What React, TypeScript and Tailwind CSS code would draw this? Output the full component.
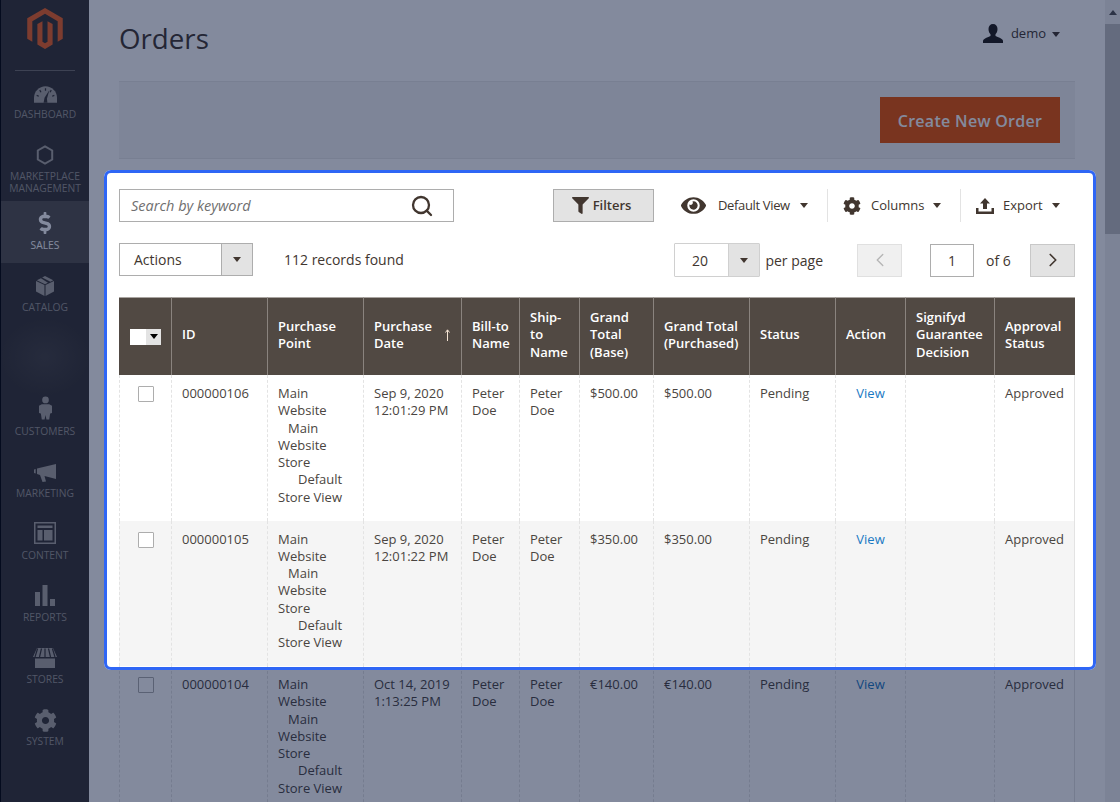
import type { ReactNode } from "react";
import { ChevronLeft, ChevronRight, Search } from "lucide-react";
import { FaCog, FaDollarSign, FaEye, FaFilter } from "react-icons/fa";

const caret = "w-0 h-0 border-x-[4.5px] border-x-transparent border-t-[5px] border-t-[#41362f]";
const navFill = "#aaa6a0";

const MagentoLogo = () => (
    <svg viewBox="1.6 0 20.8 24" className="w-[36px] h-[41px]">
        <path
            fill="#f26322"
            d="M12 24l-4.455-2.572v-12l2.97-1.715v12.001l1.485.902 1.485-.902V7.713l2.97 1.715v12L12 24zM22.391 6v12l-2.969 1.714V7.713L12 3.43 4.574 7.713v12.001L1.609 18V6L12 0l10.391 6z"
        />
    </svg>
);

const navItems: { label: string[]; icon: ReactNode; active?: boolean; height: number }[] = [
    {
        label: ["Dashboard"],
        height: 62,
        icon: (
            <svg viewBox="0 0 24 17" className="w-[23px] h-[17px]" fill={navFill}>
                <path d="M12 0C5.400 0 0 5.400 0 12v5h24v-5C24 5.400 18.600 0 12 0Z" />
                <path stroke="#373330" strokeWidth="1.300" d="M12 2v2.500M6 4l1.300 2.200M18 4l-1.300 2.200M2.800 9.500l2.200.8M21.200 9.500l-2.200.8" />
                <path fill="#373330" d="M10 17l1-5 5-8-2.500 9 .5 4z" />
            </svg>
        ),
    },
    {
        label: ["Marketplace", "Management"],
        height: 69,
        icon: (
            <svg viewBox="0 0 20 22" className="w-[18px] h-[20px]" fill="none" stroke={navFill} strokeWidth="2.200">
                <path d="M10 1.500 18 6v10l-8 4.500L2 16V6z" />
            </svg>
        ),
    },
    {
        label: ["Sales"],
        height: 62,
        active: true,
        icon: <FaDollarSign className="text-white text-[22px]" />,
    },
    {
        label: ["Catalog"],
        height: 62,
        icon: (
            <svg viewBox="0 0 20 22" className="w-[18px] h-[20px]" fill={navFill}>
                <path d="M9.400 10v12L0 17V5.400zM10.600 10v12l9.400-5V5.400zM10 0 6.800 1.600l9.300 4.700 3.100-1.600zM5.500 2.300.9 4.700l9.100 4.300 3.300-1.700z" />
            </svg>
        ),
    },
    { label: [], height: 62, icon: null },
    {
        label: ["Customers"],
        height: 62,
        icon: (
            <svg viewBox="0 0 14 25" className="w-[13px] h-[24px]" fill={navFill}>
                <circle cx="7" cy="3.800" r="3.600" />
                <path d="M3 8.500h8l3 1.500v8l-2 .5-1 6.500H8l-1-5-1 5H3l-1-6.500-2-.5v-8z" />
            </svg>
        ),
    },
    {
        label: ["Marketing"],
        height: 62,
        icon: (
            <svg viewBox="0 0 22 18" className="w-[22px] h-[18px]" fill={navFill}>
                <path d="M0 5.500 1.700 5v4.500L0 9zM3 4.600 22 0v15L10.500 12l1.500 5.500-3.500.5-2.500-7L3 10z" />
            </svg>
        ),
    },
    {
        label: ["Content"],
        height: 62,
        icon: (
            <svg viewBox="0 0 22 22" className="w-[22px] h-[22px]" fill={navFill}>
                <path fillRule="evenodd" d="M0 0h22v22H0zm1.500 1.500v19h19v-19z" />
                <path d="M3.500 3.500h15v2.500h-15zM3.500 8h5v10.500h-5zM10 8h8.500v10.500H10z" />
            </svg>
        ),
    },
    {
        label: ["Reports"],
        height: 62,
        icon: (
            <svg viewBox="0 0 20 21" className="w-[20px] h-[21px]" fill={navFill}>
                <path d="M0 7h5v14H0zM7.500 0h5v21h-5zM15 14h5v7h-5z" />
            </svg>
        ),
    },
    {
        label: ["Stores"],
        height: 62,
        icon: (
            <svg viewBox="0 0 24 20" className="w-[24px] h-[20px]" fill={navFill}>
                <path d="M4 0h16l4 9H0zM2 10.500h20V20H2z" />
                <path stroke="#373330" strokeWidth="1.200" d="M8.500 .5 6.500 9M12 .5V9M15.500 .5l2 8.500M4.600 .5 2 9M19.400 .5 22 9" />
            </svg>
        ),
    },
    {
        label: ["System"],
        height: 62,
        icon: <FaCog className="text-[#aaa6a0] text-[23px] translate-y-[2px]" />,
    },
];

const headers: { title: string[]; width: number; sort?: boolean }[] = [
    { title: ["ID"], width: 96 },
    { title: ["Purchase", "Point"], width: 96 },
    { title: ["Purchase", "Date"], width: 98, sort: true },
    { title: ["Bill-to", "Name"], width: 58 },
    { title: ["Ship-", "to", "Name"], width: 60 },
    { title: ["Grand", "Total", "(Base)"], width: 74 },
    { title: ["Grand Total", "(Purchased)"], width: 96 },
    { title: ["Status"], width: 86 },
    { title: ["Action"], width: 70 },
    { title: ["Signifyd", "Guarantee", "Decision"], width: 89 },
    { title: ["Approval", "Status"], width: 81 },
];

const rows = [
    { id: "000000106", date: ["Sep 9, 2020", "12:01:29 PM"], base: "$500.00", purchased: "$500.00" },
    { id: "000000105", date: ["Sep 9, 2020", "12:01:22 PM"], base: "$350.00", purchased: "$350.00" },
    { id: "000000104", date: ["Oct 14, 2019", "1:13:25 PM"], base: "€140.00", purchased: "€140.00" },
];

const cell = "px-[10px] pt-[10px] align-top border-l border-dashed border-[#e3e3e3]";

const Lines = ({ items }: { items: string[] }) => (
    <>
        {items.map((line) => (
            <span key={line} className="block whitespace-nowrap">
                {line}
            </span>
        ))}
    </>
);

const Sidebar = () => (
    <aside className="w-[89px] shrink-0 bg-[#373330] border-l border-black min-h-[802px]">
        <div className="h-[71px] flex justify-center pt-[8px] mx-[14px] border-b border-[#736e6a]">
            <MagentoLogo />
        </div>
        <div className="-mt-[1px]">
            {navItems.map((item, i) => (
                <div
                    key={i}
                    className={`flex flex-col items-center ${item.active ? "bg-[#55514d]" : ""}`}
                    style={{ height: item.height }}
                >
                    {item.label.length === 0 ? (
                        <div className="w-[88px] h-[76px] shrink-0 -mt-[6px] bg-[radial-gradient(closest-side,#45413e,#373330)]" />
                    ) : (
                        <>
                            <div className="h-[24px] flex items-end justify-center mt-[9px]">{item.icon}</div>
                            <div
                                className={`mt-[5px] text-center text-[10.3px] leading-[12px] uppercase ${
                                    item.active ? "text-white" : "text-[#9a9692]"
                                }`}
                            >
                                <Lines items={item.label} />
                            </div>
                        </>
                    )}
                </div>
            ))}
        </div>
    </aside>
);

const Toolbar = () => (
    <div className="text-[#41362f] text-[13px]">
        <div className="flex items-start h-[34px]">
            <div className="w-[335px] h-[33px] border border-[#adadad] bg-white flex items-center justify-between pl-[11px] pr-[19px]">
                <span className="italic text-[14.5px] text-[#6f6f6f]">Search by keyword</span>
                <Search size={24} strokeWidth={2.3} className="text-[#41362f]" />
            </div>
            <div className="ml-[99px] w-[101px] h-[33px] border border-[#adadad] bg-[#e3e3e3] flex items-center justify-center gap-[4px] pr-[4px] font-semibold">
                <FaFilter className="text-[17px]" />
                Filters
            </div>
            <div className="ml-[27px] flex items-center w-[147px] h-[33px] border-r border-[#e3e3e3]">
                <FaEye className="text-[25px]" />
                <span className="ml-[12px] tracking-[-0.35px]">Default View</span>
                <span className={`${caret} ml-[10px]`} />
            </div>
            <div className="ml-[15px] flex items-center w-[118px] h-[33px] border-r border-[#e3e3e3]">
                <FaCog className="text-[18px]" />
                <span className="ml-[10px]">Columns</span>
                <span className={`${caret} ml-[9px]`} />
            </div>
            <div className="ml-[15px] flex items-center h-[33px]">
                <svg viewBox="0 0 18 16" className="w-[18px] h-[16px]" fill="#41362f">
                    <path d="M9 0l5 5.500h-3V11H7V5.500H4zM0 10h2.500v3.500h13V10H18v6H0z" />
                </svg>
                <span className="ml-[9px]">Export</span>
                <span className={`${caret} ml-[9px]`} />
            </div>
        </div>
        <div className="flex items-start h-[34px] mt-[20px] text-[14px]">
            <div className="w-[134px] h-[33px] border border-[#adadad] bg-white flex">
                <span className="flex-1 flex items-center pl-[14px]">Actions</span>
                <span className="w-[31px] bg-[#e3e3e3] border-l border-[#adadad] flex items-center justify-center">
                    <span className={caret} />
                </span>
            </div>
            <span className="ml-[31px] h-[33px] flex items-center">112 records found</span>
            <div className="ml-auto flex items-center h-[34px]">
                <div className="w-[86px] h-[34px] border border-[#d0d0d0] bg-white flex rounded-[1px]">
                    <span className="w-[53px] pr-[4px] flex items-center justify-center">20</span>
                    <span className="flex-1 bg-[#e3e3e3] border-l border-[#d0d0d0] flex items-center justify-center">
                        <span className={caret} />
                    </span>
                </div>
                <span className="ml-[5px]">per page</span>
                <div className="ml-[34px] w-[45px] h-[33px] border border-[#e0e0e0] bg-[#f0f0f0] flex items-center justify-center">
                    <ChevronLeft size={22} strokeWidth={1.5} className="text-[#b5b5b5]" />
                </div>
                <div className="ml-[28px] w-[44px] h-[33px] border border-[#adadad] bg-white flex items-center justify-center">
                    1
                </div>
                <span className="ml-[12px] w-[44px]">of 6</span>
                <div className="w-[45px] h-[33px] border border-[#c8c8c8] bg-[#e3e3e3] flex items-center justify-center">
                    <ChevronRight size={22} strokeWidth={1.8} />
                </div>
            </div>
        </div>
    </div>
);

const OrdersTable = () => (
    <table className="table-fixed w-[956px] mt-[20px] border-separate border-spacing-0 text-[13px] leading-[17.3px] text-[#4a4541]">
        <colgroup>
            <col className="w-[52px]" />
            {headers.map((h) => (
                <col key={h.title.join(" ")} style={{ width: h.width }} />
            ))}
        </colgroup>
        <thead>
            <tr className="h-[78px] bg-[#514943] text-white text-left">
                <th className="px-0 align-middle pb-[3px] border-t border-[#a9a4a0]">
                    <div className="w-[31px] h-[16px] ml-[11px] flex mt-[3px]">
                        <span className="w-[16px] bg-white" />
                        <span className="flex-1 bg-[#e3e3e3] flex items-center justify-center">
                            <span className="w-0 h-0 border-x-[4px] border-x-transparent border-t-[5px] border-t-black" />
                        </span>
                    </div>
                </th>
                {headers.map((h) => (
                    <th
                        key={h.title.join(" ")}
                        className="px-[10px] pb-[3px] font-semibold border-l border-t border-l-[#8a837e] border-t-[#a9a4a0] align-middle relative"
                    >
                        <Lines items={h.title} />
                        {h.sort && (
                            <svg
                                viewBox="0 0 7 12"
                                className="absolute right-[10px] top-[31px] w-[7px] h-[12px]"
                                fill="none"
                                stroke="#f4e3d3"
                                strokeWidth="1"
                            >
                                <path d="M3.500 12V1M1.500 3.500 3.500 .8l2 2.700" />
                            </svg>
                        )}
                    </th>
                ))}
            </tr>
        </thead>
        <tbody>
            {rows.map((r, i) => (
                <tr key={r.id} className={`h-[145.5px] ${i % 2 === 1 ? "bg-[#f5f5f5]" : "bg-white"}`}>
                    <td className={cell}>
                        <div className="w-[16px] h-[16px] ml-[8px] mt-[1px] border border-[#adadad] bg-white rounded-[1px]" />
                    </td>
                    <td className={cell}>{r.id}</td>
                    <td className={cell}>
                        <span>Main Website</span>
                        <span className="block pl-[10px]">Main</span>
                        <span className="block">Website</span>
                        <span className="block">Store</span>
                        <span className="block pl-[20px]">Default</span>
                        <span className="block">Store View</span>
                    </td>
                    <td className={cell}>
                        <Lines items={r.date} />
                    </td>
                    <td className={cell}>
                        <Lines items={["Peter", "Doe"]} />
                    </td>
                    <td className={cell}>
                        <Lines items={["Peter", "Doe"]} />
                    </td>
                    <td className={cell}>{r.base}</td>
                    <td className={cell}>{r.purchased}</td>
                    <td className={cell}>Pending</td>
                    <td className={`${cell} text-center text-[#1979c3]`}>View</td>
                    <td className={cell} />
                    <td className={`${cell} border-r border-r-[#e3e3e3] [border-right-style:solid]`}>Approved</td>
                </tr>
            ))}
        </tbody>
    </table>
);

export default function App() {
    return (
        <div className="relative w-[1120px] h-[802px] overflow-hidden flex bg-white font-['Open_Sans',sans-serif]">
            <Sidebar />
            <main className="flex-1 min-w-0 pl-[30px] pr-[30px]">
                <div className="h-[81px] flex justify-between pt-[19px]">
                    <h1 className="text-[27.7px] leading-[38px] font-normal text-[#41362f]">Orders</h1>
                    <div className="flex items-center h-[26px] mt-[2px] text-[13px] text-[#41362f] mr-[15px]">
                        <svg viewBox="0 0 20 19" className="w-[20px] h-[19px] mr-[8px] -translate-y-[1px]" fill="#1f1a17">
                            <path d="M10 0c2.800 0 4.500 2 4.500 5 0 2.300-.9 4.300-2 5.300v1.700c1 .8 7.500 2.200 7.500 5v2H0v-2c0-2.800 6.500-4.200 7.500-5v-1.700c-1.100-1-2-3-2-5.300C5.500 2 7.200 0 10 0z" />
                        </svg>
                        demo
                        <span className={`${caret} ml-[6px]`} />
                    </div>
                </div>
                <div className="h-[78px] bg-[#f4f4f4] border-y border-[#e8e8e8] flex items-center justify-end pr-[15px] w-[956px]">
                    <div className="w-[180px] h-[46px] bg-[#eb5202] text-white font-semibold text-[16px] tracking-[0.3px] pt-[1px] flex items-center justify-center">
                        Create New Order
                    </div>
                </div>
                <div className="pt-[30px] w-[956px]">
                    <Toolbar />
                    <OrdersTable />
                </div>
            </main>
            <div className="w-[15px] shrink-0 bg-[#f1f1f1] flex flex-col">
                <div className="h-[24px] flex items-center justify-center">
                    <span className="w-0 h-0 border-x-[4px] border-x-transparent border-b-[5px] border-b-[#505050]" />
                </div>
                <div className="h-[210px] bg-[#c1c1c1]" />
            </div>
            <div className="absolute left-[104px] top-[170px] w-[992px] h-[500px] rounded-[7px] border-[3px] border-[#2f66f5] shadow-[0_0_0_2000px_rgba(7,21,59,0.5)]" />
        </div>
    );
}
